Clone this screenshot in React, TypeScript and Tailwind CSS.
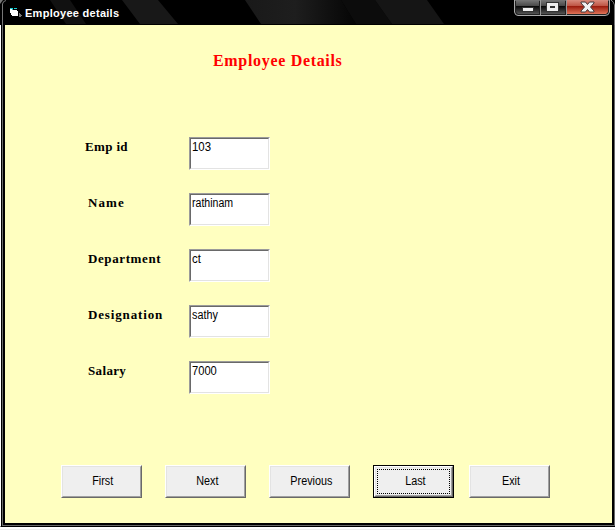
import React from 'react';

type Field = { label: string; value: string; labelClass: string; valueClass: string };

const fields: Field[] = [
  { label: 'Emp id', value: '103', labelClass: 'pl-[80px] tracking-[0.35px]', valueClass: 'scale-x-[0.95]' },
  { label: 'Name', value: 'rathinam', labelClass: 'pl-[83px] tracking-[1.1px]', valueClass: 'scale-x-[0.88]' },
  { label: 'Department', value: 'ct', labelClass: 'pl-[83px] tracking-[0.6px]', valueClass: 'scale-x-[0.95]' },
  { label: 'Designation', value: 'sathy', labelClass: 'pl-[83px] tracking-[0.85px]', valueClass: 'scale-x-[0.9]' },
  { label: 'Salary', value: '7000', labelClass: 'pl-[83px] tracking-[0.35px]', valueClass: 'scale-x-[0.93]' },
];

const buttons = [
  { text: 'First', margin: '', active: false },
  { text: 'Next', margin: 'ml-[23px]', active: false },
  { text: 'Previous', margin: 'ml-[23px]', active: false },
  { text: 'Last', margin: 'ml-[23px]', active: true },
  { text: 'Exit', margin: 'ml-[15px]', active: false },
];

function TitleBar() {
  return (
    <header className="relative flex h-[25px] w-full shrink-0 items-start overflow-hidden bg-black">
      <svg className="absolute inset-0" width="615" height="25" aria-hidden="true">
        <defs>
          <linearGradient id="sheen" x1="0" x2="1">
            <stop offset="0" stopColor="#191919" />
            <stop offset=".45" stopColor="#1e1e1e" />
            <stop offset="1" stopColor="#050505" />
          </linearGradient>
        </defs>
        <path d="M50 0h20l16 24H66z" fill="#111" />
        <path d="M122 0h36l20 24h-38z" fill="#181818" />
        <path d="M245 0h96l15 24h-95z" fill="url(#sheen)" />
        <path d="M341 0h34l17 24h-36z" fill="#0c0c0c" />
        <path d="M375 0h52l17 24h-52z" fill="#151515" />
        <path d="M2.5 25V4Q3 1 6 .5" fill="none" stroke="#777" />
        <path d="M611 0Q614 2 614.5 5V25" fill="none" stroke="#777" />
        <path d="M0 0h3L0 4z" fill="#777" />
      </svg>
      <svg className="relative ml-[9px] mt-[7px] shrink-0" width="14" height="12" shapeRendering="crispEdges" aria-hidden="true">
        <path d="M1 2h3v1h4v1h1v5H3V8H2V6H1z" fill="#fff" />
        <path d="M1 1h3v1H1zM5 1h3v1H5zM3 2h1v1H3z" fill="#18cbd2" />
        <path d="M10 6h1v1h1v1h1v1h-1v1h-2z" fill="#777" />
      </svg>
      <h1 className="relative ml-[2px] mt-[5px] whitespace-nowrap font-['Liberation_Sans',sans-serif] text-[11px] font-bold leading-4 tracking-[0.28px] text-white">Employee details</h1>
      <WindowControls />
    </header>
  );
}

function WindowControls() {
  return (
    <svg className="relative ml-auto mr-[5px] shrink-0" width="97" height="18" viewBox="0 0 97 18" aria-hidden="true">
      <defs>
        <linearGradient id="dark" x2="0" y2="1">
          <stop stopColor="#777" /><stop offset=".45" stopColor="#454545" />
          <stop offset=".46" stopColor="#090909" /><stop offset="1" stopColor="#555" />
        </linearGradient>
        <linearGradient id="red" x2="0" y2="1">
          <stop stopColor="#d88b7d" /><stop offset=".45" stopColor="#bd5140" />
          <stop offset=".46" stopColor="#9c1d0e" /><stop offset="1" stopColor="#df7358" />
        </linearGradient>
      </defs>
      <path d="M1.5 0H96.5V12Q96 15.5 92 15.5H5Q2 15.5 1.5 12Z" fill="#222" stroke="#aaa" />
      <path d="M3 0h23v14H5l-2-2z" fill="url(#dark)" />
      <path d="M28 0h24v14H28z" fill="url(#dark)" />
      <path d="M54 0h41v12l-2 2H54z" fill="url(#red)" />
      <path d="M27.5 0v15M53.5 0v15" stroke="#999" />
      <path d="M9 7h12v5H9z" fill="#333" />
      <path d="M10 8h10v3H10z" fill="#eee" />
      <path d="M33 2h13v10H33z" fill="#333" />
      <path fillRule="evenodd" d="M34 3h11v8H34zM37 6v2h5V6z" fill="#eee" />
      <path d="M68 2h4.5l2 2.5 2-2.5H81v1l-3.5 4L81 11v1h-4.5l-2-2.5-2 2.5H68v-1l3.5-4L68 3z" fill="#f1f1f1" stroke="#44383a" />
    </svg>
  );
}

function FieldRow({ field }: { field: Field }) {
  return (
    <div className="flex h-8 shrink-0">
      <label className={`w-[184px] shrink-0 whitespace-nowrap pt-[2px] font-['Liberation_Serif',serif] text-[13px] font-bold leading-4 text-black ${field.labelClass}`}>
        {field.label}
      </label>
      <div className="h-[33px] w-[81px] shrink-0 border border-b-white border-l-[#9b9b9b] border-r-white border-t-[#9b9b9b]">
        <div className="h-full border border-b-[#e3e3e3] border-l-[#696969] border-r-[#e3e3e3] border-t-[#696969] bg-white pl-px font-['Liberation_Sans',sans-serif] text-[12px] leading-4 text-black">
          <span className={`inline-block origin-left ${field.valueClass}`}>{field.value}</span>
        </div>
      </div>
    </div>
  );
}

function CommandButton({ text, margin, active }: { text: string; margin: string; active: boolean }) {
  return (
    <button className={`h-[33px] w-[81px] shrink-0 ${margin} ${active ? 'border border-black' : 'border border-b-[#696969] border-l-white border-r-[#696969] border-t-white'}`}>
      <span className={`flex h-full w-full border bg-[#efefef] ${active ? 'border-b-[#696969] border-l-white border-r-[#696969] border-t-white' : 'border-b-[#a0a0a0] border-l-[#e3e3e3] border-r-[#a0a0a0] border-t-[#e3e3e3] p-px'}`}>
        <span className={`flex w-full border ${active ? 'border-b-[#a0a0a0] border-l-[#e3e3e3] border-r-[#a0a0a0] border-t-[#e3e3e3] p-px' : 'border-transparent'}`}>
          <span className={`flex w-full items-center justify-center border pb-0.5 pl-[3px] font-['Liberation_Sans',sans-serif] text-[12px] leading-4 text-black ${active ? 'border-dotted border-black' : 'border-transparent'}`}>
            <span className="inline-block scale-x-[0.9]">{text}</span>
          </span>
        </span>
      </span>
    </button>
  );
}

export default function App() {
  return (
    <div className="flex h-[530px] w-[615px] flex-col overflow-hidden bg-white">
      <TitleBar />
      <div className="flex h-[502px] shrink-0 border-b border-l border-b-black border-l-white">
        <div className="flex w-full border-l border-black">
          <div className="flex w-full border-x border-b border-[#696969]">
            <main className="flex w-full flex-col border-x-2 border-b-2 border-black bg-[#ffffc0]">
              <h2 className="ml-[208px] mt-7 h-4 whitespace-nowrap font-['Liberation_Serif',serif] text-[16px] font-bold leading-4 tracking-[0.68px] text-[#f00]">Employee Details</h2>
              <section className="mt-[68px] flex flex-col gap-6">
                {fields.map((field) => <FieldRow key={field.label} field={field} />)}
              </section>
              <nav className="ml-14 mt-[72px] flex">
                {buttons.map((button) => <CommandButton key={button.text} {...button} />)}
              </nav>
            </main>
          </div>
        </div>
      </div>
      <div className="mt-0.5 h-px bg-[#eee]" />
    </div>
  );
}
